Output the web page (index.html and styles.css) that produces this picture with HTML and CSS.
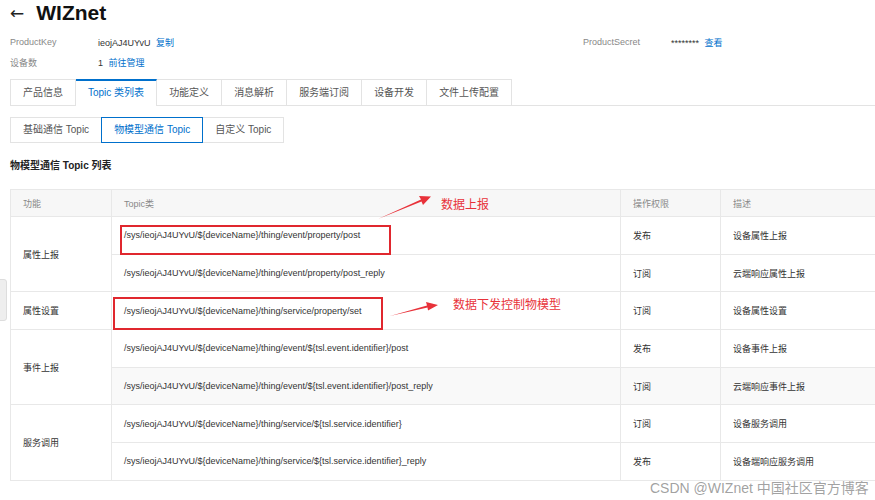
FILE: index.html
```html
<!DOCTYPE html>
<html lang="zh">
<head>
<meta charset="utf-8">
<link rel="stylesheet" href="styles.css">
</head>
<body>
<div class="page">
  <div class="title-row">
    <span class="back">&#8592;</span>
    <h1 class="title">WIZnet</h1>
  </div>
  <div class="meta">
    <div class="meta-row">
      <span class="meta-label">ProductKey</span>
      <span class="meta-value">ieojAJ4UYvU <a class="link">复制</a></span>
      <span class="meta-label">ProductSecret</span>
      <span class="meta-value">******** <a class="link">查看</a></span>
    </div>
    <div class="meta-row">
      <span class="meta-label">设备数</span>
      <span class="meta-value">1 <a class="link">前往管理</a></span>
    </div>
  </div>

  <div class="tabs">
    <div class="tab">产品信息</div>
    <div class="tab active">Topic 类列表</div>
    <div class="tab">功能定义</div>
    <div class="tab">消息解析</div>
    <div class="tab">服务端订阅</div>
    <div class="tab">设备开发</div>
    <div class="tab">文件上传配置</div>
  </div>

  <div class="subtabs">
    <div class="subtab">基础通信 Topic</div>
    <div class="subtab active">物模型通信 Topic</div>
    <div class="subtab">自定义 Topic</div>
  </div>

  <div class="section-title">物模型通信 Topic 列表</div>

  <table class="topic-table">
    <colgroup>
      <col class="c-func"><col class="c-topic"><col class="c-perm"><col class="c-desc">
    </colgroup>
    <thead>
      <tr><th>功能</th><th>Topic类</th><th>操作权限</th><th>描述</th></tr>
    </thead>
    <tbody>
      <tr><td rowspan="2">属性上报</td><td>/sys/ieojAJ4UYvU/${deviceName}/thing/event/property/post</td><td>发布</td><td>设备属性上报</td></tr>
      <tr><td>/sys/ieojAJ4UYvU/${deviceName}/thing/event/property/post_reply</td><td>订阅</td><td>云端响应属性上报</td></tr>
      <tr><td>属性设置</td><td>/sys/ieojAJ4UYvU/${deviceName}/thing/service/property/set</td><td>订阅</td><td>设备属性设置</td></tr>
      <tr><td rowspan="2">事件上报</td><td>/sys/ieojAJ4UYvU/${deviceName}/thing/event/${tsl.event.identifier}/post</td><td>发布</td><td>设备事件上报</td></tr>
      <tr class="hover"><td>/sys/ieojAJ4UYvU/${deviceName}/thing/event/${tsl.event.identifier}/post_reply</td><td>订阅</td><td>云端响应事件上报</td></tr>
      <tr><td rowspan="2">服务调用</td><td>/sys/ieojAJ4UYvU/${deviceName}/thing/service/${tsl.service.identifier}</td><td>订阅</td><td>设备服务调用</td></tr>
      <tr><td>/sys/ieojAJ4UYvU/${deviceName}/thing/service/${tsl.service.identifier}_reply</td><td>发布</td><td>设备端响应服务调用</td></tr>
    </tbody>
  </table>
</div>

<div class="side-handle"></div>

<div class="mark box1"></div>
<div class="mark box2"></div>
<svg class="arrows" width="875" height="500" viewBox="0 0 875 500">
  <polygon points="378,219 421,199.5 419,196 431,196.5 423,205 421.5,201.5" fill="#e8323a"/>
  <polygon points="390,316 427,305.5 426,302 438,305 428,310.5 427.5,307.5" fill="#e8323a"/>
</svg>
<div class="note note1">数据上报</div>
<div class="note note2">数据下发控制物模型</div>

<div class="watermark">CSDN @WIZnet 中国社区官方博客</div>
</body>
</html>
```

FILE: styles.css
```css
html, body {
  margin: 0;
  padding: 0;
  background: #ffffff;
}
body {
  font-family: "Liberation Sans", "Noto Sans CJK SC", sans-serif;
  color: #333333;
  width: 875px;
  height: 500px;
  overflow: hidden;
  position: relative;
}
.page {
  padding-left: 10px;
}
.title-row {
  display: flex;
  align-items: center;
  height: 26px;
  gap: 12px;
}
.back {
  font-size: 17px;
  line-height: 26px;
  color: #222;
  font-family: "DejaVu Sans", sans-serif;
}
.title {
  margin: 0;
  font-size: 21px;
  font-weight: 700;
  line-height: 26px;
  color: #111;
  font-family: "Liberation Sans", sans-serif;
}
.meta {
  margin-top: 6px;
}
.meta-row {
  display: grid;
  grid-template-columns: 88px 485px 88px auto;
  height: 20px;
  align-items: center;
  font-size: 9px;
}
.meta-label {
  color: #888888;
}
.meta-value {
  color: #333333;
}
.link {
  color: #0070cc;
  margin-left: 3px;
}
.tabs {
  margin-top: 7px;
  display: flex;
  border-bottom: 1px solid #e3e3e3;
  height: 26px;
}
.tab {
  padding: 0 12px;
  font-size: 10px;
  color: #555;
  border: 1px solid #e3e3e3;
  border-left: none;
  border-bottom: none;
  line-height: 25px;
  background: #fff;
}
.tab:first-child {
  border-left: 1px solid #e3e3e3;
}
.tab.active {
  color: #0070cc;
  border-top: 2px solid #0070cc;
  line-height: 24px;
  margin-bottom: -1px;
  height: 25px;
  background: #fff;
}
.subtabs {
  margin-top: 11px;
  display: flex;
  height: 26px;
}
.subtab {
  padding: 0 12px;
  font-size: 10px;
  color: #555;
  border: 1px solid #e3e3e3;
  border-left: none;
  line-height: 24px;
}
.subtab:first-child {
  border-left: 1px solid #e3e3e3;
}
.subtab.active {
  color: #0070cc;
  border: 1px solid #0070cc;
  margin-left: -1px;
}
.section-title {
  margin-top: 13px;
  height: 20px;
  line-height: 20px;
  font-size: 10px;
  font-weight: 700;
  color: #222;
}
.topic-table {
  margin-top: 13px;
  border-collapse: collapse;
  table-layout: fixed;
  width: 880px;
  font-size: 9px;
}
.c-func { width: 101px; }
.c-topic { width: 509px; }
.c-perm { width: 100px; }
.c-desc { width: 170px; }
.topic-table th,
.topic-table td {
  border: 1px solid #e8e8e8;
  text-align: left;
  padding: 0 12px;
  white-space: nowrap;
}
.topic-table th {
  height: 26px;
  background: #f7f7f7;
  color: #888;
  font-weight: 400;
}
.topic-table td {
  height: 36.7px;
  color: #333;
}
.topic-table tr.hover td {
  background: #f9f9f9;
}
.side-handle {
  position: absolute;
  left: -2px;
  top: 279px;
  width: 7px;
  height: 40px;
  background: #eeeeee;
  border: 1px solid #dddddd;
  border-radius: 0 3px 3px 0;
}
.mark {
  position: absolute;
  border: 2px solid #e0272e;
  box-sizing: border-box;
}
.box1 {
  left: 120px;
  top: 225px;
  width: 271px;
  height: 30px;
}
.box2 {
  left: 113px;
  top: 297px;
  width: 270px;
  height: 33px;
}
.arrows {
  position: absolute;
  left: 0;
  top: 0;
  pointer-events: none;
}
.note {
  position: absolute;
  color: #e8323a;
  font-size: 12px;
  line-height: 16px;
  font-family: "Noto Sans CJK SC", sans-serif;
}
.note1 {
  left: 441px;
  top: 196px;
}
.note2 {
  left: 453px;
  top: 296px;
}
.watermark {
  position: absolute;
  left: 650px;
  top: 478px;
  font-size: 14px;
  line-height: 20px;
  color: rgba(120, 120, 120, 0.7);
  font-family: "Liberation Sans", "Noto Sans CJK SC", sans-serif;
  white-space: nowrap;
}
```
